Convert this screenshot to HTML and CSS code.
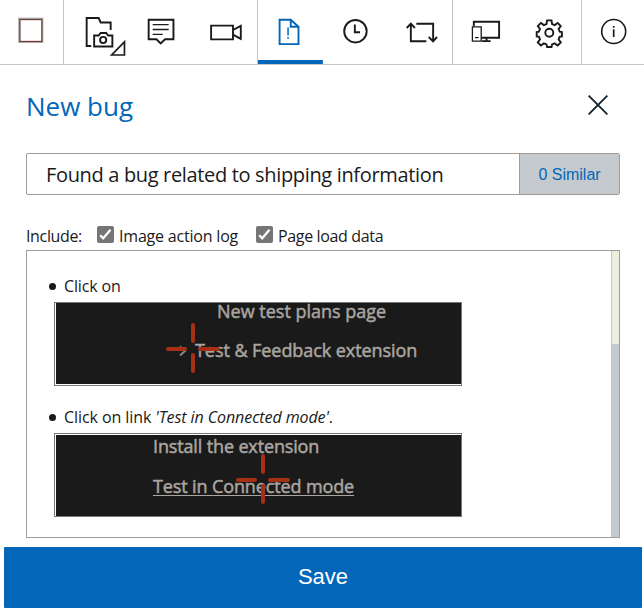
FILE: index.html
```html
<!DOCTYPE html>
<html lang="en">
<head>
<meta charset="utf-8">
<title>New bug</title>
<link rel="stylesheet" href="styles.css">
</head>
<body>
<nav class="toolbar">
  <div class="group"><svg class="tool" viewBox="0 0 63 64"><rect x="19" y="18.5" width="23.5" height="23.5" fill="none" stroke="#b5babd"/><rect x="19.9" y="19.5" width="22" height="22" stroke="#6b3c30" stroke-width="1.3"/></svg></div>
  <div class="group">
    <svg class="tool" viewBox="64 0 64 64"><path d="M91 46h-4.5V18h12l2 4.5h10V30"/><path d="M94 35.5h4.5l2-2.5h5.5l2 2.5h4.2v11H94z"/><circle cx="103" cy="40" r="3.1"/><path d="M111.5 55h12.8V41.8z" stroke-width="1.7"/></svg>
    <svg class="tool" viewBox="128 0 64 64"><path d="M148.5 19.7h24.8v19.6h-8.4l-4.4 4.2-4.2-4.2h-7.8z"/><path d="M152.5 24.6h16M152.5 29.5h16M152.5 34.4h10" stroke-width="1.4"/></svg>
    <svg class="tool" viewBox="192 0 65 64"><path d="M210.3 25.6h22.1v13.8h-22.1zM232.4 30l7.9-4.2v13.1l-7.9-4.2"/></svg>
  </div>
  <div class="group">
    <svg class="tool active" viewBox="258 0 65 64"><path d="M279.7 19.7h11.2l7.8 7v17.5h-19zM290.9 19.7v7h7.8"/><path d="M288.2 27.5v8M288.2 37v1.8" stroke-width="1.5"/></svg>
    <svg class="tool" viewBox="323 0 65 64"><circle cx="355.6" cy="31.2" r="11.3"/><path d="M355 24.5v7.8h5.2"/></svg>
    <svg class="tool" viewBox="388 0 64 64"><path d="M427 41.2h-15.5V23.8M407.4 28l4.1-4.3 4.1 4.3M417 23.7h16.8v17.5M429.4 37l4.3 4.4 4-4.4"/></svg>
  </div>
  <div class="group">
    <svg class="tool" viewBox="453 0 64 64"><path d="M473.8 26.5v-4.8h25.3v16h-17.6M486.5 38v3M482 41.1h8.6"/><path d="M472.4 26.9h8.8v14.2h-8.8zM475 37.6h3.6" stroke-width="1.3"/></svg>
    <svg class="tool" viewBox="517 0 64 64"><g transform="translate(549.3 32.7)"><path d="M-2.2 -12.3h4.4l.6 3.6 2.6 1.1 3-2.2 3.1 3.1-2.2 3 1.1 2.6 2.2.5v4.4l-2.3.4-1 2.5 2.2 3-3.1 3.1-3-2.1-2.6 1-.6 2.6h-4.4l-.6-2.6-2.6-1-3 2.1-3.1-3.1 2.2-3-1-2.5-2.3-.4v-4.4l2.2-.5 1.1-2.6-2.2-3 3.1-3.1 3 2.2 2.6-1.1z"/><circle r="4"/></g></svg>
  </div>
  <div class="group"><svg class="tool" viewBox="582 0 62 64"><circle cx="613.7" cy="31.5" r="12" stroke-width="1.6"/><path d="M613.7 29.3v7.8M613.7 26v1.8" stroke-width="1.7"/></svg></div>
</nav>
<main>
  <header><h1>New bug</h1><svg class="close" viewBox="0 0 20 20"><path d="M.6.6l18.8 18.8M19.4.6L.6 19.4"/></svg></header>
  <div class="title"><div class="field"><span class="fieldtext">Found a bug related to shipping information</span></div><button class="similar">0 Similar</button></div>
  <div class="include">
    <span class="label">Include:</span>
    <svg class="check" viewBox="0 0 17 17"><rect width="17" height="17" rx="2"/><path d="M3.2 9.2l3 3.1 7.3-8.5"/></svg><span class="opt log">Image action log</span>
    <svg class="check" viewBox="0 0 17 17"><rect width="17" height="17" rx="2"/><path d="M3.2 9.2l3 3.1 7.3-8.5"/></svg><span class="opt data">Page load data</span>
  </div>
  <section class="editor">
    <div class="steps">
      <div class="step"><i class="dot"></i><span class="s1">Click on</span></div>
      <div class="shot first">
        <div class="line a"><span>New test plans page</span></div>
        <div class="line b"><svg class="arrow" viewBox="0 0 10 12"><path d="M3 1.5l5 4.5-5 4.5"/></svg><span>Test &amp; Feedback extension</span></div>
        <svg class="cross c1" viewBox="0 0 56 52"><path d="M28 3v16M28 33v16M3 27h17M35 27h18"/></svg>
      </div>
      <div class="step"><i class="dot"></i><span class="s2">Click on link <em>'Test in Connected mode'</em>.</span></div>
      <div class="shot second">
        <div class="line c"><span>Install the extension</span></div>
        <div class="line d"><span>Test in Connected mode</span></div>
        <svg class="cross c2" viewBox="0 0 56 52"><path d="M28 3v16M28 33v16M3 27h17M35 27h18"/></svg>
      </div>
    </div>
    <div class="scrollbar"><div class="thumb"></div></div>
  </section>
</main>
<button class="save">Save</button>
</body>
</html>
```

FILE: styles.css
```css
* { box-sizing: border-box; }
body { margin: 0; width: 644px; height: 611px; overflow: hidden; background: #fff; color: #1a1a1a; font-family: "Open Sans", "Noto Sans", sans-serif; }
svg { display: block; flex: none; }
.toolbar { display: grid; grid-template-columns: 64px 194px 195px 129px 62px; height: 65px; border-bottom: 1px solid #bfc5ca; }
.group { display: flex; border-right: 1px solid #bfc5ca; }
.group:last-child { border-right: 0; }
.tool { flex: 1; min-width: 0; height: 64px; fill: none; stroke: #1a1a1a; stroke-width: 1.9; }
.tool.active { stroke: #0366b8; background: linear-gradient(#0366b8, #0366b8) bottom / 100% 4px no-repeat; }
main { padding: 0 24px 0 26px; }
header { display: flex; justify-content: space-between; height: 88px; }
h1 { margin: 23px 0 0; color: #0366b8; font-size: 26px; font-weight: 400; line-height: 36px; }
.close { width: 20px; height: 20px; margin: 30px 12px 0 0; fill: none; stroke: #10202c; stroke-width: 1.8; }
.title { display: flex; height: 42px; border: 1px solid #a39b94; border-radius: 2px; }
.field { flex: 1; padding-left: 19px; font-size: 20px; line-height: 42px; letter-spacing: -.34px; white-space: nowrap; }
.similar { width: 100px; padding: 0; border: 0; border-left: 1px solid #a39b94; background: #c5cacf; color: #0366b8; font: 16px/42px "Liberation Sans", sans-serif; }
.include { display: flex; align-items: center; height: 29px; margin-top: 26px; font-size: 16px; white-space: nowrap; }
.label { width: 71px; letter-spacing: -.35px; }
.check { width: 17px; height: 17px; fill: #757575; position: relative; top: -1px; }
.check path { fill: none; stroke: #fff; stroke-width: 2.3; }
.opt { padding-left: 5px; }
.log { width: 142px; letter-spacing: -.2px; }
.data { letter-spacing: -.35px; }
.editor { display: flex; height: 288px; border: 1px solid #a39b94; }
.steps { flex: 1; padding: 19px 0 0 27px; }
.scrollbar { width: 8px; background: #c5cacf; }
.thumb { height: 93px; border-left: 1px solid #c5cacf; background: #eeeedf; }
.step { display: flex; align-items: center; height: 32px; margin-left: -5px; font-size: 16px; white-space: nowrap; }
.s1 { letter-spacing: -.15px; }
.s2 { letter-spacing: -.08px; }
.dot { width: 7px; height: 7px; margin-right: 8px; border-radius: 50%; background: #1a1a1a; }
.shot { position: relative; width: 408px; height: 84px; border: 1px solid #777; background: #1a1a1a; color: #aaa5a0; font-size: 18px; line-height: 24px; white-space: nowrap; -webkit-text-stroke: .5px; }
.first { box-shadow: inset 1px -1px #fff; margin-bottom: 15px; }
.second { box-shadow: inset 1px 1px #fff; }
.line { display: flex; height: 24px; }
.a { margin-top: -4px; padding-left: 162px; }
.b { margin-top: 15px; padding-left: 122px; letter-spacing: -.06px; }
.arrow { width: 10px; height: 12px; margin: 7px 8px 0 0; fill: none; stroke: #888; stroke-width: 2; }
.c { margin-top: 0; padding-left: 98px; letter-spacing: -.14px; }
.d { margin-top: 16px; padding-left: 98px; letter-spacing: -.12px; }
.d span { text-decoration: underline; text-decoration-thickness: 1px; text-underline-offset: 2px; }
.cross { position: absolute; width: 56px; height: 52px; fill: none; stroke: #a63016; stroke-width: 4; stroke-linecap: round; }
.c1 { left: 110px; top: 19px; }
.c2 { left: 180px; top: 19px; }
.save { display: block; width: 638px; height: 61px; margin: 9px 0 0 4px; padding: 0 0 2px; border: 0; border-radius: 1px; background: #0366b8; color: #fff; font: 22px/58px "Liberation Sans", sans-serif; }
```
